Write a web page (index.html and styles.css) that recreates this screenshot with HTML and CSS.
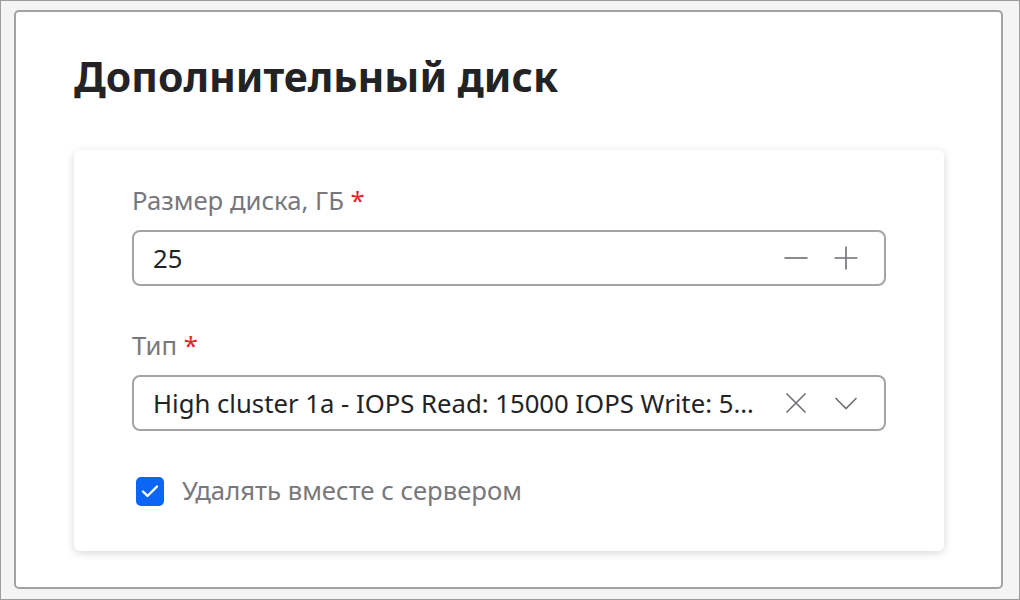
FILE: index.html
```html
<!DOCTYPE html>
<html lang="ru">
<head>
    <meta charset="UTF-8">
    <meta name="viewport" content="width=device-width, initial-scale=1.0">
    <title>Дополнительный диск</title>
    <link rel="stylesheet" href="styles.css">
</head>
<body>
    <div class="frame">
        <h1 class="title">Дополнительный диск</h1>

        <div class="card">
            <div class="field">
                <label class="label" for="disk_size">Размер диска, ГБ <span class="req">*</span></label>
                <div class="control">
                    <input class="control-input" type="text" id="disk_size" value="25">
                    <button class="icon-btn" type="button" aria-label="Уменьшить">
                        <svg width="24" height="24" viewBox="0 0 24 24"><path d="M0.5 12h23" /></svg>
                    </button>
                    <button class="icon-btn" type="button" aria-label="Увеличить">
                        <svg width="24" height="24" viewBox="0 0 24 24"><path d="M0.5 12h23M12 0.5v23" /></svg>
                    </button>
                </div>
            </div>

            <div class="field">
                <label class="label" for="disk_type">Тип <span class="req">*</span></label>
                <div class="control">
                    <div class="control-text" id="disk_type">High cluster 1a - IOPS Read: 15000 IOPS Write: 5000 - Throughput: 300 MB/s</div>
                    <button class="icon-btn" type="button" aria-label="Очистить">
                        <svg width="24" height="24" viewBox="0 0 24 24"><path d="M2.5 2.5l19 19M21.5 2.5l-19 19" /></svg>
                    </button>
                    <button class="icon-btn" type="button" aria-label="Открыть">
                        <svg width="24" height="24" viewBox="0 0 24 24"><path d="M1.5 7l10.5 10.5L22.5 7" /></svg>
                    </button>
                </div>
            </div>

            <label class="check">
                <span class="check-box">
                    <svg width="18" height="14" viewBox="0 0 18 14"><path d="M2 7.5l4.5 4.5L16 2.5" /></svg>
                </span>
                Удалять вместе с сервером
            </label>
        </div>
    </div>
</body>
</html>
```

FILE: styles.css
```css
* {
    box-sizing: border-box;
}

html, body {
    height: 100%;
}

body {
    margin: 0;
    padding: 9px 16px 10px 13px;
    background-color: #f4f4f4;
    border: 1px solid #9c9c9c;
    font-family: "Noto Sans", "Open Sans", sans-serif;
    display: flex;
}

.frame {
    flex: 1;
    min-width: 0;
    background: #ffffff;
    border: 2px solid #a2a2a4;
    border-radius: 5px;
    padding: 36px 57px 0 58px;
}

.title {
    margin: 0 0 46px;
    font-size: 41px;
    line-height: 56px;
    font-weight: 700;
    color: #232326;
}

.card {
    background: #ffffff;
    border-radius: 6px;
    box-shadow: 0 2px 8px rgba(0, 0, 0, 0.16);
    padding: 36px 58px 45px;
}

.field {
    margin-bottom: 45px;
}

.label {
    display: block;
    font-size: 25.7px;
    line-height: 30px;
    color: #78787c;
    margin-bottom: 14px;
}

.req {
    color: #e5242a;
}

.control {
    display: flex;
    align-items: center;
    height: 56px;
    border: 2px solid #a4a4a8;
    border-radius: 8px;
    padding: 0 26px 0 19px;
    gap: 26px;
}

.control-input,
.control-text {
    flex: 1;
    min-width: 0;
    border: none;
    outline: none;
    padding: 0;
    font-family: inherit;
    font-size: 25.7px;
    color: #232326;
    background: transparent;
}

.control-text {
    white-space: nowrap;
    overflow: hidden;
    text-overflow: ellipsis;
}

.icon-btn {
    border: none;
    background: none;
    padding: 0;
    width: 24px;
    height: 24px;
    cursor: pointer;
}

.icon-btn svg {
    display: block;
    fill: none;
    stroke: #6f6f74;
    stroke-width: 1.6;
}

.check {
    display: flex;
    align-items: center;
    gap: 18px;
    margin-left: 4px;
    font-size: 25.7px;
    line-height: 30px;
    color: #78787c;
    cursor: pointer;
}

.check-box {
    width: 28px;
    height: 29px;
    border-radius: 5px;
    background: #0b66f5;
    display: flex;
    align-items: center;
    justify-content: center;
}

.check-box svg {
    fill: none;
    stroke: #ffffff;
    stroke-width: 2.4;
    stroke-linecap: round;
    stroke-linejoin: round;
}
```
